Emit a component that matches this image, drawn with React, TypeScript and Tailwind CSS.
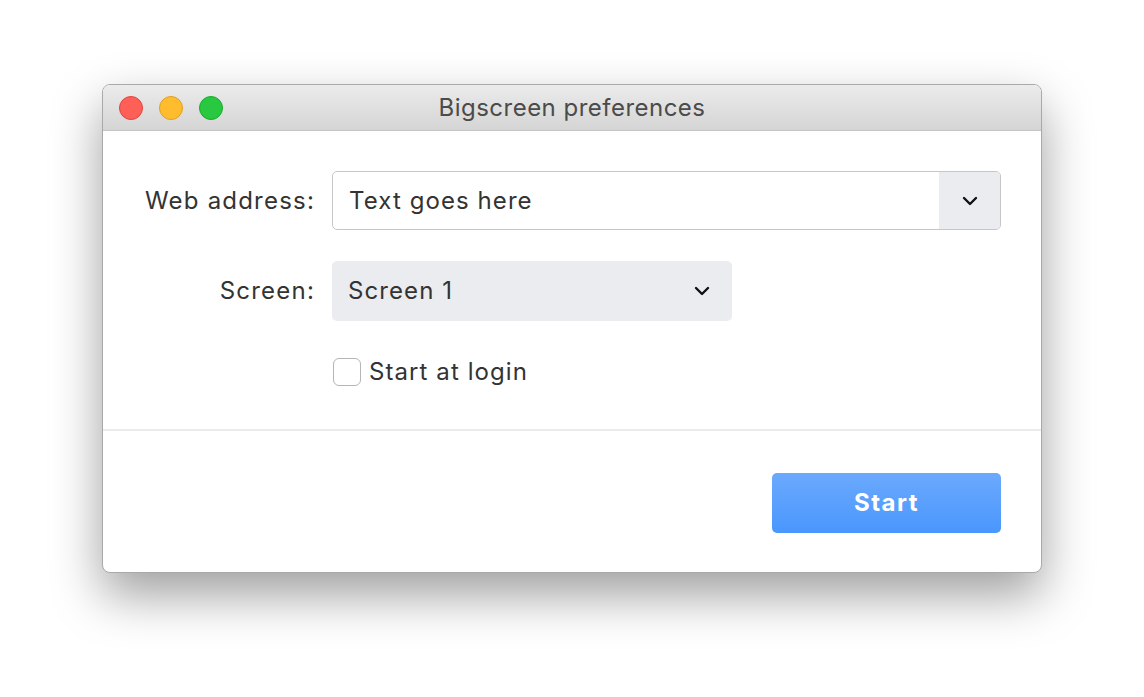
import { ChevronDown } from "lucide-react";

const FONT = { fontFamily: "Inter, 'Noto Sans', 'Liberation Sans', sans-serif" };

function TrafficLights() {
  return (
    <div className="flex items-center gap-[16px] pl-[16px]">
      <span className="h-[24px] w-[24px] rounded-full border border-[#e0443e] bg-[#fe5f57]" />
      <span className="h-[24px] w-[24px] rounded-full border border-[#dea123] bg-[#febc2e]" />
      <span className="h-[24px] w-[24px] rounded-full border border-[#1aab29] bg-[#28c840]" />
    </div>
  );
}

function Row({ label, children }: { label: string; children: React.ReactNode }) {
  return (
    <div className="flex items-center">
      <div className="w-[229px] shrink-0 pr-[17px] text-right text-[24px] tracking-[0.05em] text-[#333]">{label}</div>
      {children}
    </div>
  );
}

export default function App() {
  return (
    <div className="h-[697px] w-[1144px] bg-white pl-[102px] pt-[84px]" style={FONT}>
      <div className="flex h-[489px] w-[940px] flex-col overflow-hidden rounded-[8px] border border-[#a9a9a9] bg-white shadow-[0_22px_50px_rgba(0,0,0,0.38)]">
        <div className="relative flex h-[46px] shrink-0 items-center border-b border-[#c4c4c4] bg-gradient-to-b from-[#ebebeb] to-[#d5d5d5]">
          <TrafficLights />
          <div className="absolute inset-0 flex items-center justify-center text-[24px] tracking-[0.02em] text-[#4b4b4b]">
            Bigscreen preferences
          </div>
        </div>

        <div className="flex flex-col pr-[40px] pt-[40px]">
          <Row label="Web address:">
            <div className="flex h-[59px] flex-1 overflow-hidden rounded-[5px] border border-[#c6c6c6]">
              <div className="flex flex-1 items-center px-[16px] text-[24px] tracking-[0.045em] text-[#333]">Text goes here</div>
              <div className="flex w-[61px] items-center justify-center bg-[#ebecf0]">
                <ChevronDown className="h-[24px] w-[24px] text-[#111]" strokeWidth={2.4} />
              </div>
            </div>
          </Row>
          <div className="h-[31px]" />
          <Row label="Screen:">
            <div className="flex h-[60px] w-[400px] items-center justify-between rounded-[5px] bg-[#ebecf0] pl-[16px] pr-[18px] text-[24px] tracking-[0.045em] text-[#333]">
              <span>Screen 1</span>
              <ChevronDown className="h-[24px] w-[24px] text-[#111]" strokeWidth={2.4} />
            </div>
          </Row>
          <div className="h-[33px]" />
          <div className="flex items-center pl-[230px]">
            <span className="h-[28px] w-[28px] rounded-[6px] border border-[#b5b5b5] bg-white" />
            <span className="pl-[8px] text-[24px] tracking-[0.045em] text-[#333]">Start at login</span>
          </div>
        </div>

        <div className="mt-[39px] h-[2px] bg-[#ebebeb]" />

        <div className="flex justify-end pr-[40px] pt-[42px]">
          <button className="h-[60px] w-[229px] rounded-[5px] bg-gradient-to-b from-[#6ba9fd] to-[#4997fd] text-[24px] font-bold tracking-[0.06em] text-white">
            Start
          </button>
        </div>
      </div>
    </div>
  );
}
